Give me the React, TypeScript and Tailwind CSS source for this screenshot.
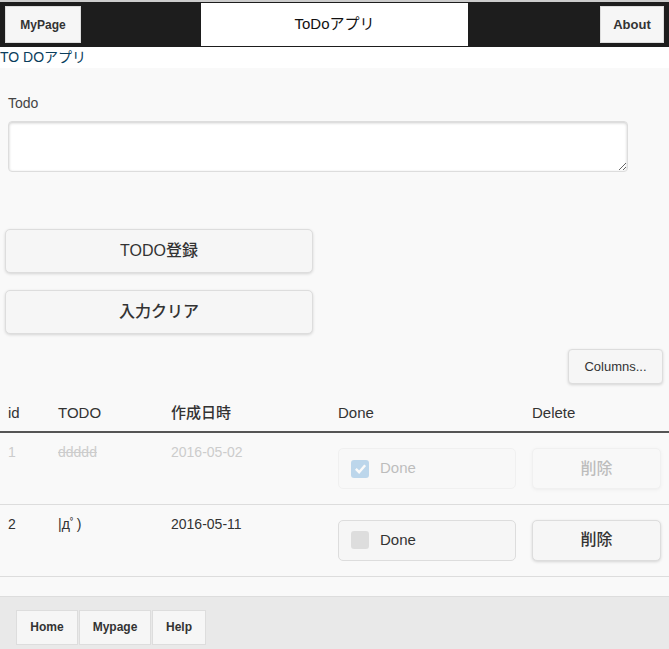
import React from 'react';

type Todo = { id: number; text: string; created: string; done: boolean };

const todos: Todo[] = [
  { id: 1, text: 'ddddd', created: '2016-05-02', done: true },
  { id: 2, text: '|дﾟ)', created: '2016-05-11', done: false },
];

const font = { fontFamily: '"Liberation Sans", "Noto Sans CJK JP", sans-serif' };

const footerNav = [
  { label: 'Home', w: 'w-[62px]' },
  { label: 'Mypage', w: 'w-[72px]' },
  { label: 'Help', w: 'w-[54px]' },
];

const App: React.FC = () => {
  return (
    <div className="min-h-[649px] bg-[#f9f9f9] text-[#333]" style={font}>
      {/* Header */}
      <div className="flex h-[47px] items-stretch border-t-2 border-[#ccc] bg-[#1d1d1d] px-[5px]">
        <button className="my-[4px] w-[76px] border border-[#ddd] bg-[#f6f6f6] text-[12px] font-bold text-[#333]">
          MyPage
        </button>
        <div className="my-[1px] ml-[120px] flex w-[267px] items-center justify-center bg-white text-[15px] text-[#111]">
          ToDoアプリ
        </div>
        <button className="my-[4px] ml-auto w-[64px] border border-[#ddd] bg-[#f6f6f6] text-[13px] font-bold text-[#333]">
          About
        </button>
      </div>

      <div className="h-[21px] bg-white text-[14px] leading-[20px] text-[#0a3d5c]">TO DOアプリ</div>

      {/* Form */}
      <div className="px-[8px] pt-[25px]">
        <label className="block text-[14px] leading-[20px] text-[#444]">Todo</label>
        <textarea className="mt-[8px] block h-[51px] w-[620px] resize-y rounded-[4px] border border-[#ddd] bg-white shadow-[inset_0_1px_3px_rgba(0,0,0,0.2)] outline-none" />
      </div>

      <div className="flex flex-col gap-[17px] px-[5px] pt-[57px]">
        <button className="h-[44px] w-[308px] rounded-[5px] border border-[#ddd] bg-[#f6f6f6] text-[16px] font-medium text-[#333] shadow-[0_1px_3px_rgba(0,0,0,0.15)]">
          TODO登録
        </button>
        <button className="h-[44px] w-[308px] rounded-[5px] border border-[#ddd] bg-[#f6f6f6] text-[16px] font-medium text-[#333] shadow-[0_1px_3px_rgba(0,0,0,0.15)]">
          入力クリア
        </button>
      </div>

      <div className="flex justify-end px-[6px] pt-[15px]">
        <button className="h-[35px] w-[95px] rounded-[4px] border border-[#ddd] bg-[#f6f6f6] text-[13px] font-medium text-[#333] shadow-[0_1px_3px_rgba(0,0,0,0.15)]">
          Columns...
        </button>
      </div>

      {/* Table */}
      <table className="mt-[11px] w-full border-collapse text-left">
        <thead>
          <tr className="h-[37px] border-b-2 border-[#555] text-[15px]">
            <th className="w-[58px] pl-[8px] font-medium">id</th>
            <th className="w-[113px] font-medium">TODO</th>
            <th className="w-[167px] font-medium">作成日時</th>
            <th className="w-[194px] font-medium">Done</th>
            <th className="font-medium">Delete</th>
          </tr>
        </thead>
        <tbody>
          {todos.map((t) => (
            <tr key={t.id} className="h-[72px] border-b border-[#ddd] align-top text-[14px]">
              <td className={`pl-[8px] pt-[9px] ${t.done ? 'text-[#ccc]' : ''}`}>{t.id}</td>
              <td className={`pt-[9px] ${t.done ? 'text-[#ccc] line-through' : ''}`}>{t.text}</td>
              <td className={`pt-[9px] ${t.done ? 'text-[#ccc]' : ''}`}>{t.created}</td>
              <td className="pt-[15px]">
                <label
                  className={`flex h-[41px] w-[178px] items-center gap-[11px] rounded-[5px] border border-[#ddd] bg-[#f6f6f6] pl-[12px] text-[15px] ${
                    t.done ? 'opacity-30' : ''
                  }`}
                >
                  {t.done ? (
                    <span className="flex h-[18px] w-[18px] items-center justify-center rounded-[3px] bg-[#3388cc]">
                      <svg viewBox="0 0 14 14" className="h-[13px] w-[13px]">
                        <path d="M2 7.5 L5.5 11 L12 3.5" stroke="white" strokeWidth="2.6" fill="none" />
                      </svg>
                    </span>
                  ) : (
                    <span className="h-[18px] w-[18px] rounded-[3px] bg-[#ddd]" />
                  )}
                  Done
                </label>
              </td>
              <td className="pr-[8px] pt-[15px]">
                <button
                  className={`h-[41px] w-[129px] rounded-[5px] border border-[#ddd] bg-[#f6f6f6] text-[16px] font-medium text-[#333] shadow-[0_1px_3px_rgba(0,0,0,0.15)] ${
                    t.done ? 'opacity-30' : ''
                  }`}
                >
                  削除
                </button>
              </td>
            </tr>
          ))}
        </tbody>
      </table>

      {/* Footer */}
      <div className="mt-[19px] border-t border-[#ddd] bg-[#e9e9e9] px-[16px] pt-[13px] pb-[5px]">
        <div className="flex gap-[1px]">
          {footerNav.map((n) => (
            <button
              key={n.label}
              className={`h-[35px] ${n.w} border border-[#ddd] bg-[#f6f6f6] text-[12px] font-bold text-[#333]`}
            >
              {n.label}
            </button>
          ))}
        </div>
      </div>
    </div>
  );
};

export default App;
